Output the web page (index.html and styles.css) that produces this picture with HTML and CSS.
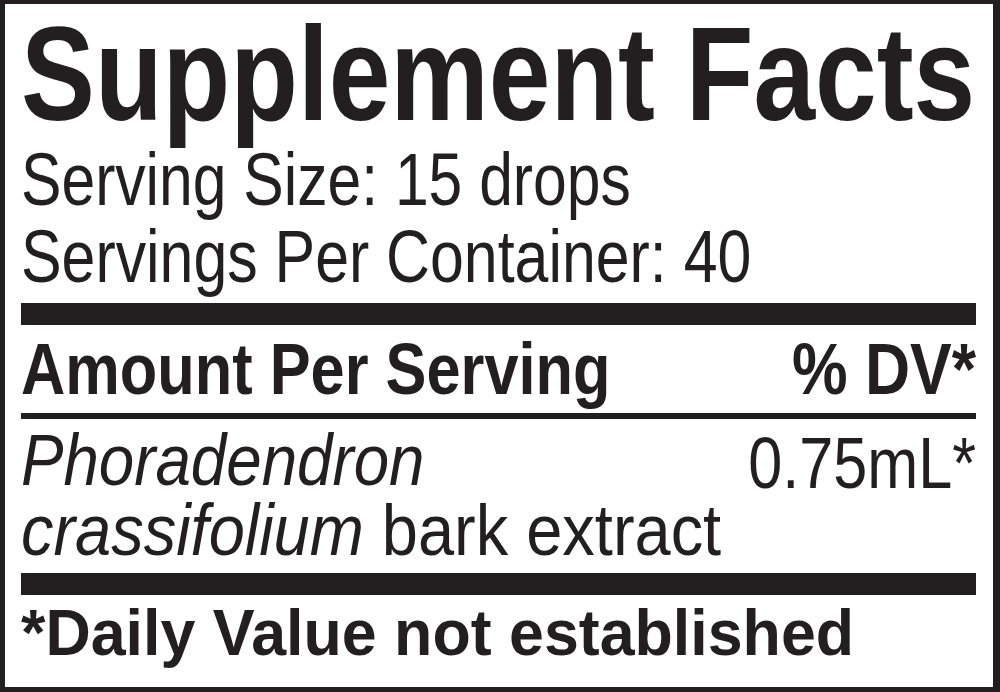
FILE: index.html
```html
<!DOCTYPE html>
<html>
<head>
<meta charset="utf-8">
<link rel="stylesheet" href="styles.css">
</head>
<body>
<div class="label">
  <h1 class="title"><span class="sx sx-title">Supplement Facts</span></h1>
  <div class="serving">
    <p class="line"><span class="sx sx-size">Serving Size: 15 drops</span></p>
    <p class="line"><span class="sx sx-count">Servings Per Container: 40</span></p>
  </div>
  <div class="rule-thick"></div>
  <div class="head-row">
    <span class="sx sx-amount">Amount Per Serving</span>
    <span class="sx sx-dv">% DV*</span>
  </div>
  <div class="rule-thin"></div>
  <div class="ingredient">
    <div class="ing-name">
      <div class="ing-line"><span class="sx sx-ing1"><i>Phoradendron</i></span></div>
      <div class="ing-line"><span class="sx sx-ing2"><i>crassifolium</i> bark extract</span></div>
    </div>
    <div class="ing-amt"><span class="sx sx-amt">0.75mL*</span></div>
  </div>
  <div class="rule-thick rule-bottom"></div>
  <p class="footnote"><span class="sx sx-foot">*Daily Value not established</span></p>
</div>
</body>
</html>
```
FILE: styles.css
```css
html, body {
  margin: 0;
  padding: 0;
  background: #fff;
}
body {
  width: 1000px;
  height: 692px;
  overflow: hidden;
  font-family: "Liberation Sans", Arial, Helvetica, sans-serif;
  color: #231f20;
}
.label {
  box-sizing: border-box;
  width: 1000px;
  height: 692px;
  border-style: solid;
  border-color: #231f20;
  border-width: 4px 7px 5px 5px;
  padding: 0 17px 0 16px;
  display: flex;
  flex-direction: column;
  overflow: hidden;
}
.label > * {
  flex-shrink: 0;
}
.sx {
  display: inline-block;
  white-space: nowrap;
  transform-origin: left center;
}
.sx-title { transform: scaleX(0.833); }
.sx-size { transform: scaleX(0.819); }
.sx-count { transform: scaleX(0.822); }
.sx-amount { transform: scaleX(0.84); }
.sx-dv { transform: scaleX(0.856); transform-origin: right center; }
.sx-ing1 { transform: scaleX(0.884); }
.sx-ing2 { transform: scaleX(0.902); }
.sx-amt { transform: scaleX(0.85); transform-origin: right center; }
.sx-foot { transform: scaleX(0.965); }

.title {
  margin: 0;
  font-size: 133px;
  line-height: 140px;
  height: 137px;
  font-weight: bold;
  white-space: nowrap;
}
.serving .line {
  margin: 0;
  font-size: 74px;
  line-height: 77px;
  height: 77px;
  white-space: nowrap;
}
.rule-thick {
  height: 22px;
  background: #231f20;
  margin-top: 8px;
}
.head-row {
  display: flex;
  justify-content: space-between;
  font-size: 73px;
  font-weight: bold;
  line-height: 88px;
  height: 88px;
}
.rule-thin {
  height: 6px;
  background: #231f20;
}
.ingredient {
  display: flex;
  justify-content: space-between;
  margin-top: 6px;
  font-size: 72px;
  line-height: 70px;
}
.ing-name {
  flex: 1 1 0;
  min-width: 0;
}
.ing-line {
  height: 70px;
}
.ing-amt {
  flex: none;
  padding-top: 3px;
}
.rule-bottom {
  margin-top: 8px;
}
.footnote {
  margin: 0;
  font-size: 65px;
  font-weight: bold;
  line-height: 76px;
  white-space: nowrap;
}
```
